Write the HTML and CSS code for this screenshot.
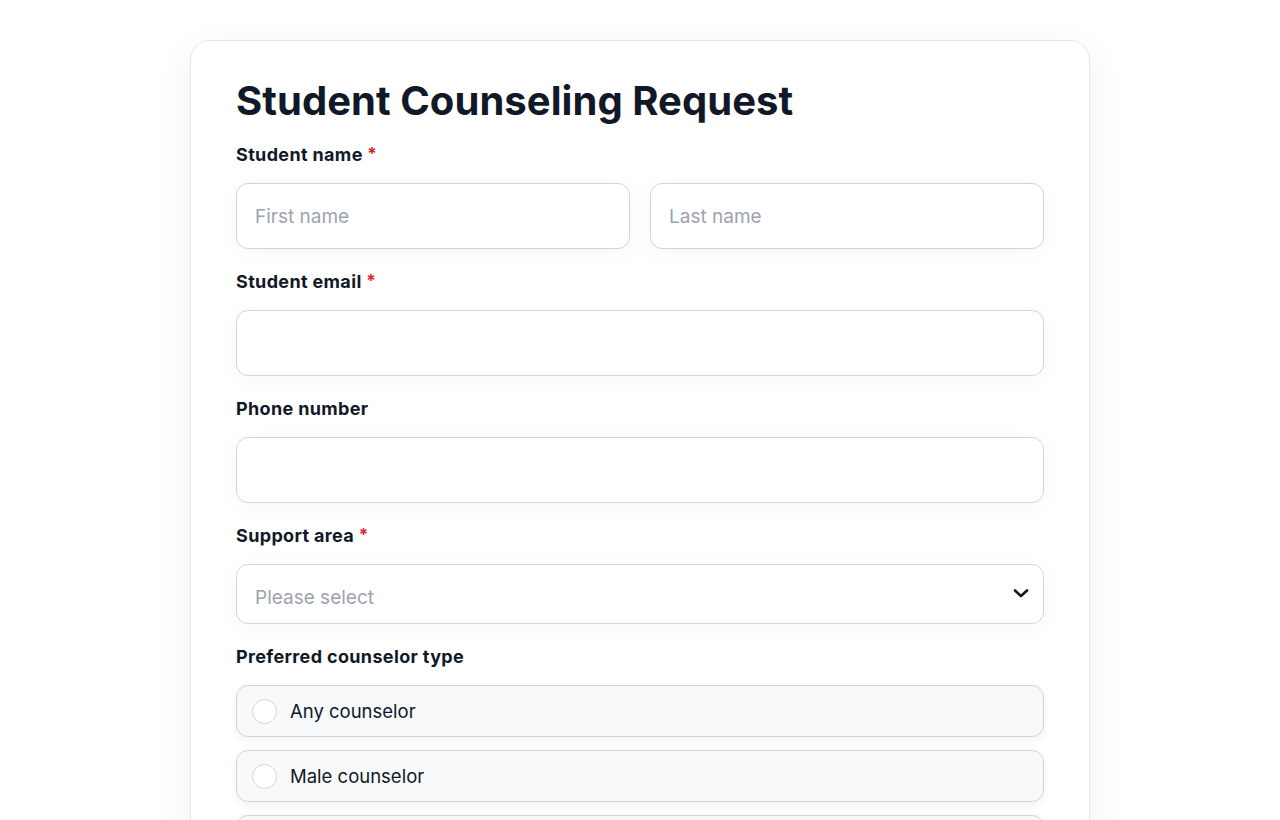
FILE: index.html
```html
<!DOCTYPE html>
<html lang="en">
<head>
<meta charset="utf-8">
<title>Student Counseling Request</title>
<link rel="stylesheet" href="styles.css">
</head>
<body>
<main class="page">
  <form class="card">
    <h1 class="title">Student Counseling Request</h1>

    <div class="field">
      <label class="label">Student name <span class="req">*</span></label>
      <div class="row">
        <input class="input" type="text" placeholder="First name">
        <input class="input" type="text" placeholder="Last name">
      </div>
    </div>

    <div class="field">
      <label class="label">Student email <span class="req">*</span></label>
      <input class="input" type="email">
    </div>

    <div class="field">
      <label class="label">Phone number</label>
      <input class="input" type="tel">
    </div>

    <div class="field">
      <label class="label">Support area <span class="req">*</span></label>
      <div class="select">
        <span class="select-text">Please select</span>
        <svg class="chevron" width="18" height="18" viewBox="0 0 18 18" fill="none"><path d="M3 6.5l6 5.5 6-5.5" stroke="#111827" stroke-width="2.6" stroke-linecap="round" stroke-linejoin="round"/></svg>
      </div>
    </div>

    <div class="field">
      <label class="label">Preferred counselor type</label>
      <div class="options">
        <div class="option"><span class="radio"></span><span class="option-text">Any counselor</span></div>
        <div class="option"><span class="radio"></span><span class="option-text">Male counselor</span></div>
        <div class="option"><span class="radio"></span><span class="option-text">Female counselor</span></div>
      </div>
    </div>
  </form>
</main>
</body>
</html>
```

FILE: styles.css
```css
* { box-sizing: border-box; }
html, body { margin: 0; padding: 0; background: #ffffff; }
body {
  font-family: "Inter", "Noto Sans", "Liberation Sans", sans-serif;
  color: #111827;
}
.page {
  padding-top: 40px;
  display: flex;
  justify-content: center;
}
.card {
  width: 900px;
  background: #fff;
  border: 1px solid #e5e7eb;
  border-radius: 20px;
  padding: 36px 45px 40px;
  box-shadow: 0 10px 40px rgba(17, 24, 39, 0.06);
}
.title {
  margin: 0 0 18px;
  font-size: 40px;
  line-height: 48px;
  font-weight: 700;
  letter-spacing: 0.05px;
  color: #111827;
}
.field { margin-bottom: 21px; }
.label {
  display: block;
  font-size: 18px;
  line-height: 24px;
  font-weight: 700;
  letter-spacing: 0.35px;
  color: #111827;
  margin-bottom: 16px;
}
.req { color: #dc2626; font-size: 17px; line-height: 0; vertical-align: 1px; }
.row { display: flex; gap: 20px; }
.input {
  display: block;
  width: 100%;
  height: 66px;
  border: 1px solid #d1d5db;
  border-radius: 12px;
  padding: 0 18px;
  font-family: inherit;
  font-size: 19px;
  color: #111827;
  background: #fff;
  box-shadow: 0 4px 24px rgba(17, 24, 39, 0.035);
  outline: none;
}
.input::placeholder { color: #9ca3af; }
.select {
  height: 60px;
  border: 1px solid #d1d5db;
  border-radius: 12px;
  padding: 6px 18px 0;
  display: flex;
  align-items: center;
  justify-content: space-between;
  box-shadow: 0 4px 24px rgba(17, 24, 39, 0.035);
}
.select-text { font-size: 19px; color: #9ca3af; }
.chevron { margin-top: -9px; margin-right: -5px; }
.options { display: flex; flex-direction: column; gap: 13px; }
.option {
  height: 52px;
  display: flex;
  align-items: center;
  gap: 13px;
  padding: 0 15px;
  background: #f8f9fb;
  border: 1px solid #d1d5db;
  border-radius: 12px;
  box-shadow: 0 3px 10px rgba(17, 24, 39, 0.06);
}
.radio {
  width: 25px;
  height: 25px;
  border-radius: 50%;
  border: 1.5px solid #d1d5db;
  background: #fff;
  flex: none;
}
.option-text { font-size: 18.5px; color: #111827; }
```
